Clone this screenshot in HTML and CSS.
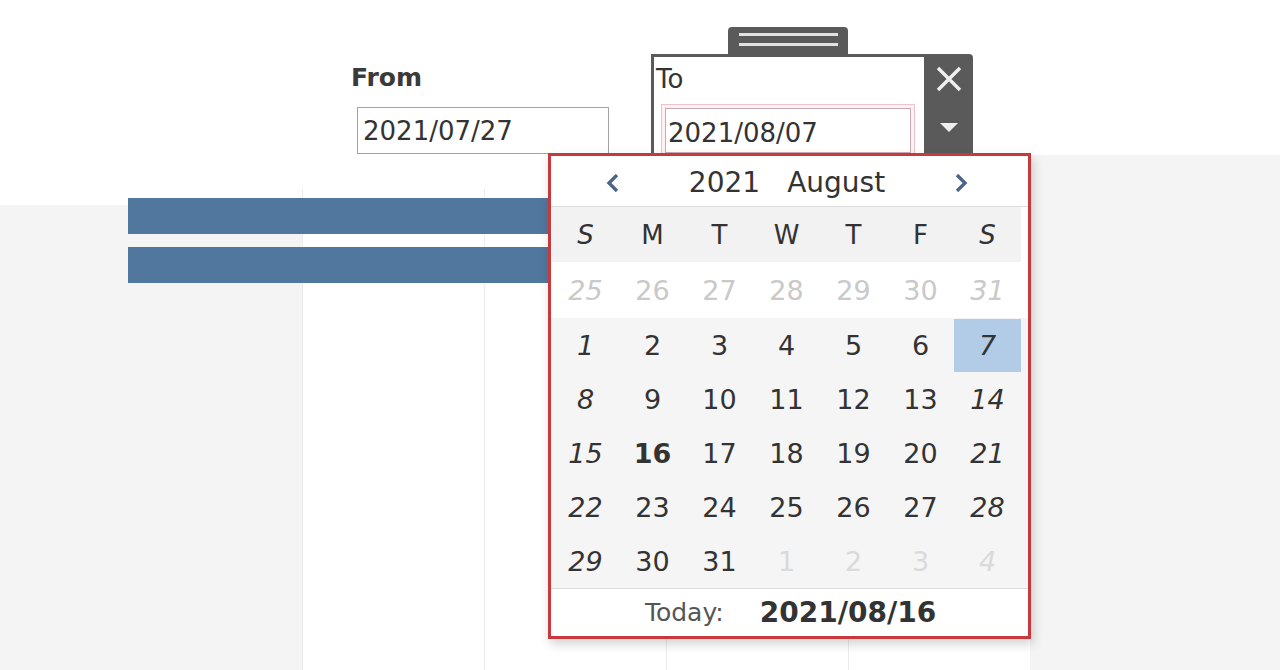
FILE: index.html
```html
<!DOCTYPE html>
<html lang="en">
<head>
<meta charset="utf-8">
<title>Date filter</title>
<link rel="stylesheet" href="styles.css">
</head>
<body>
<div class="page">
  <header class="filters">
    <div class="filter filter-from">
      <div class="filter-label">From</div>
      <div class="date-input">2021/07/27</div>
    </div>
    <div class="filter filter-to">
      <div class="drag-tab"><span class="grip"></span><span class="grip"></span></div>
      <div class="to-card">
        <div class="to-body">
          <div class="to-label">To</div>
          <div class="date-input focused">2021/08/07</div>
        </div>
        <div class="to-strip">
          <svg class="icon-close" width="28" height="26" viewBox="0 0 28 26"><path d="M3 2 L25 24 M25 2 L3 24" stroke="#efefef" stroke-width="3.4" fill="none"/></svg>
          <svg class="icon-caret" width="18" height="9" viewBox="0 0 18 9"><polygon points="0,0 18,0 9,9" fill="#efefef"/></svg>
        </div>
      </div>
    </div>
  </header>
  <main class="chart">
    <div class="row-pane"></div>
    <div class="plot">
      <div class="grid-col"></div>
      <div class="grid-col"></div>
      <div class="grid-col"></div>
      <div class="grid-col"></div>
    </div>
    <div class="side-pane"></div>
    <div class="marks">
      <div class="bar"></div>
      <div class="bar"></div>
    </div>
  </main>
</div>

<div class="calendar">
  <div class="cal-head">
    <svg class="chev" width="18" height="18" viewBox="0 0 18 18"><polyline points="13,1 5,9 13,17" fill="none" stroke="#4b6686" stroke-width="3.4"/></svg>
    <div class="cal-title"><span>2021</span><span>August</span></div>
    <svg class="chev" width="18" height="18" viewBox="0 0 18 18"><polyline points="5,1 13,9 5,17" fill="none" stroke="#4b6686" stroke-width="3.4"/></svg>
  </div>
  <div class="cal-weekdays">
    <span class="we">S</span><span>M</span><span>T</span><span>W</span><span>T</span><span>F</span><span class="we">S</span>
  </div>
  <div class="cal-row prev">
    <span class="we">25</span><span>26</span><span>27</span><span>28</span><span>29</span><span>30</span><span class="we">31</span>
  </div>
  <div class="cal-month">
    <div class="cal-row">
      <span class="we">1</span><span>2</span><span>3</span><span>4</span><span>5</span><span>6</span><span class="we sel">7</span>
    </div>
    <div class="cal-row">
      <span class="we">8</span><span>9</span><span>10</span><span>11</span><span>12</span><span>13</span><span class="we">14</span>
    </div>
    <div class="cal-row">
      <span class="we">15</span><span class="today">16</span><span>17</span><span>18</span><span>19</span><span>20</span><span class="we">21</span>
    </div>
    <div class="cal-row">
      <span class="we">22</span><span>23</span><span>24</span><span>25</span><span>26</span><span>27</span><span class="we">28</span>
    </div>
    <div class="cal-row">
      <span class="we">29</span><span>30</span><span>31</span><span class="next">1</span><span class="next">2</span><span class="next">3</span><span class="next we">4</span>
    </div>
  </div>
  <div class="cal-foot">
    <span class="foot-label">Today:</span><span class="foot-date">2021/08/16</span>
  </div>
</div>
</body>
</html>
```

FILE: styles.css
```css
html, body {
  margin: 0;
  padding: 0;
}
body {
  width: 1280px;
  height: 670px;
  overflow: hidden;
  background: #ffffff;
  font-family: "DejaVu Sans", "Liberation Sans", sans-serif;
  color: #333333;
  position: relative;
}
.page {
  display: flex;
  flex-direction: column;
  height: 670px;
}

/* ---------- filters ---------- */
.filters {
  height: 155px;
  flex: 0 0 155px;
  display: flex;
  align-items: flex-start;
  position: relative;
  z-index: 2;
}
.filter-from {
  margin-left: 351px;
  padding-top: 63px;
}
.filter-label {
  font-size: 25px;
  font-weight: 700;
  line-height: 30px;
  color: #3a3a3a;
}
.date-input {
  box-sizing: border-box;
  font-size: 26px;
  line-height: 30px;
  color: #333;
  display: flex;
  align-items: center;
}
.filter-from .date-input {
  margin: 14px 0 0 6px;
  width: 252px;
  height: 47px;
  border: 1px solid #a3a3a3;
  padding-left: 5px;
}
.filter-to {
  margin-left: 42px;
  padding-top: 27px;
  display: flex;
  flex-direction: column;
}
.drag-tab {
  margin-left: 77px;
  width: 120px;
  height: 27px;
  background: #5a5a5a;
  border-radius: 4px 4px 0 0;
  box-sizing: border-box;
  padding: 6px 10px 0 11px;
  display: flex;
  flex-direction: column;
  gap: 7px;
}
.grip {
  display: block;
  height: 3px;
  background: #e2e2e2;
}
.to-card {
  display: flex;
  height: 102px;
}
.to-body {
  width: 273px;
  box-sizing: border-box;
  border-left: 3px solid #5a5a5a;
  border-top: 3px solid #5a5a5a;
  background: #fff;
}
.to-label {
  font-size: 26px;
  line-height: 30px;
  margin: 7px 0 0 2px;
  color: #333;
}
.filter-to .date-input {
  margin: 10px 0 0 7px;
  width: 254px;
  height: 53px;
  border: 1px solid #efc3ce;
  box-shadow: inset 0 0 0 3px #fdf1f4, inset 0 0 0 4px #c7a9b2;
  padding: 4px 0 0 6px;
}
.to-strip {
  width: 49px;
  background: #5a5a5a;
  border-radius: 0 4px 0 0;
  display: flex;
  flex-direction: column;
  align-items: center;
  padding-top: 12px;
  box-sizing: border-box;
}
.icon-close {
  display: block;
}
.icon-caret {
  display: block;
  margin-top: 31px;
}

/* ---------- chart ---------- */
.chart {
  flex: 1;
  display: grid;
  grid-template-columns: 302px 728px 1fr;
  grid-template-rows: 50px 1fr;
}
.row-pane {
  grid-column: 1;
  grid-row: 2;
  background: #f4f4f4;
}
.plot {
  grid-column: 2;
  grid-row: 1 / 3;
  display: grid;
  grid-template-columns: repeat(4, 182px);
  padding-top: 34px;
}
.grid-col {
  border-left: 1px solid #ececec;
}
.side-pane {
  grid-column: 3;
  grid-row: 1 / 3;
  background: #f4f4f4;
}
.marks {
  grid-column: 1 / 3;
  grid-row: 1 / 3;
  padding: 43px 0 0 128px;
  display: flex;
  flex-direction: column;
  gap: 13px;
}
.bar {
  width: 450px;
  height: 36px;
  background: #52779f;
}

/* ---------- calendar popup ---------- */
.calendar {
  position: absolute;
  left: 548px;
  top: 153px;
  width: 483px;
  height: 486px;
  box-sizing: border-box;
  border: 3px solid #c8393d;
  background: #fff;
  box-shadow: 2px 5px 10px rgba(0,0,0,0.18);
  z-index: 5;
  display: flex;
  flex-direction: column;
}
.cal-head {
  box-sizing: border-box;
  height: 51px;
  flex: 0 0 51px;
  border-bottom: 1px solid #dddddd;
  display: flex;
  align-items: center;
  padding: 4px 58px 0 53px;
}
.chev {
  display: block;
  flex: 0 0 18px;
}
.cal-title {
  flex: 1;
  display: flex;
  justify-content: center;
  gap: 27px;
  font-size: 28px;
  line-height: 34px;
  color: #333;
}
.cal-weekdays,
.cal-row {
  display: grid;
  grid-template-columns: repeat(7, 67px);
  margin-left: 1px;
}
.cal-weekdays {
  width: 469px;
  height: 55px;
  background: #f2f2f2;
  font-size: 26px;
  color: #333;
}
.cal-weekdays span,
.cal-row span {
  display: flex;
  align-items: center;
  justify-content: center;
}
.we {
  font-style: italic;
}
.cal-row {
  height: 54px;
  font-size: 27px;
  color: #333;
}
.cal-row.prev {
  height: 56px;
  color: #c9c9c9;
}
.cal-month {
  background: #f5f5f5;
}
.cal-row span.sel {
  background: #b2cce8;
  margin-top: 1px;
}
.cal-row span.today {
  font-weight: 700;
}
.cal-row span.next {
  color: #dadada;
}
.cal-foot {
  flex: 1;
  border-top: 1px solid #dddddd;
  display: flex;
  align-items: center;
  justify-content: center;
  gap: 36px;
  padding-left: 2px;
}
.foot-label {
  font-size: 25px;
  color: #555;
}
.foot-date {
  font-size: 28px;
  font-weight: 700;
  color: #333;
}
```
